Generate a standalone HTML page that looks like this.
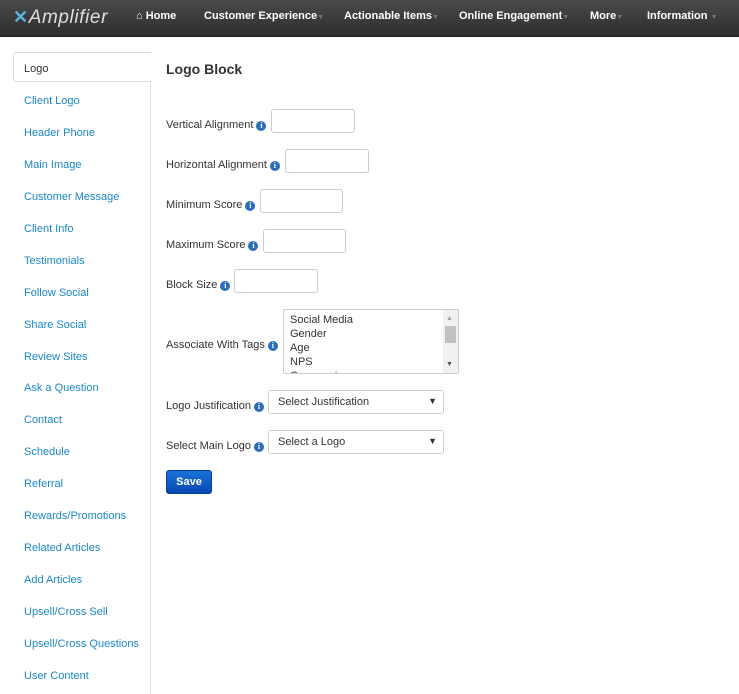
<!DOCTYPE html>
<html><head><style>
*{box-sizing:border-box}
body{margin:0;width:739px;height:694px;overflow:hidden;background:#fff;font-family:"Liberation Sans",Arial,sans-serif;font-size:11px;color:#333;position:relative}
.nav{position:absolute;left:0;top:0;width:739px;height:37px;background:linear-gradient(#4a4a4a,#2e2e2e);border-bottom:1px solid #222}
.nav span{position:absolute;top:10px;color:#fff;font-weight:bold;font-size:11px}
.nav .c{color:#777;font-size:7px;font-weight:normal;font-style:normal}
.logo{position:absolute;left:13px;top:7px;color:#ddd;font-style:italic;font-size:19px;font-family:"Liberation Sans",sans-serif;letter-spacing:0.6px}
.side{position:absolute;left:150px;top:52px;width:1px;height:642px;background:#ddd}
.act{position:absolute;left:13px;top:52px;width:138px;height:30px;border:1px solid #ddd;border-right:none;border-radius:4px 0 0 4px;background:#fff}
.si{position:absolute;left:24px;color:#1b87c9;font-size:11px;margin-top:2px}
h3{position:absolute;left:166px;top:61px;margin:0;font-size:14px;font-weight:bold;color:#333}
.lb{position:absolute;left:166px;font-size:11px;color:#333;margin-top:1px}
.i{display:inline-block;width:10px;height:10px;border-radius:50%;background:#2a6ebb;color:#fff;font-size:8px;font-weight:bold;text-align:center;line-height:10px;font-family:"Liberation Serif",serif;margin-left:3px;vertical-align:0px}
.in{position:absolute;height:24px;border:1px solid #ccc;border-radius:3px;background:#fff}
.sel{position:absolute;left:268px;width:176px;height:24px;border:1px solid #ccc;border-radius:3px;padding:5px 0 0 9px;font-size:11px}
.sel b{position:absolute;right:6px;top:5px;font-size:9px;font-weight:normal}
.btn{position:absolute;left:166px;top:470px;width:46px;height:24px;background:linear-gradient(#1a73d8,#0548b0);border:1px solid #043c94;border-radius:3px;color:#fff;font-weight:bold;text-align:center;line-height:23px}
</style></head><body>
<div class="nav">
<div class="logo"><span style="position:static;color:#5ab4e0;font-style:normal;font-size:18px;font-weight:bold">✕</span>Amplifier</div>
<span style="left:136px">⌂ Home</span>
<span style="left:204px">Customer Experience<i class="c">▼</i></span>
<span style="left:344px">Actionable Items<i class="c">▼</i></span>
<span style="left:459px">Online Engagement<i class="c">▼</i></span>
<span style="left:590px">More<i class="c">▼</i></span>
<span style="left:647px">Information <i class="c">▼</i></span>
</div>
<div class="side"></div>
<div class="act"></div>
<div class="si" style="top:61px;color:#333">Logo</div>
<div class="si" style="top:93px">Client Logo</div>
<div class="si" style="top:125px">Header Phone</div>
<div class="si" style="top:157px">Main Image</div>
<div class="si" style="top:189px">Customer Message</div>
<div class="si" style="top:221px">Client Info</div>
<div class="si" style="top:253px">Testimonials</div>
<div class="si" style="top:285px">Follow Social</div>
<div class="si" style="top:317px">Share Social</div>
<div class="si" style="top:349px">Review Sites</div>
<div class="si" style="top:380px">Ask a Question</div>
<div class="si" style="top:412px">Contact</div>
<div class="si" style="top:444px">Schedule</div>
<div class="si" style="top:476px">Referral</div>
<div class="si" style="top:508px">Rewards/Promotions</div>
<div class="si" style="top:540px">Related Articles</div>
<div class="si" style="top:572px">Add Articles</div>
<div class="si" style="top:604px">Upsell/Cross Sell</div>
<div class="si" style="top:636px">Upsell/Cross Questions</div>
<div class="si" style="top:668px">User Content</div>
<h3>Logo Block</h3>
<div class="lb" style="top:118px">Vertical Alignment<span class="i">i</span></div><div class="in" style="left:271px;top:109px;width:84px"></div>
<div class="lb" style="top:158px">Horizontal Alignment<span class="i">i</span></div><div class="in" style="left:285px;top:149px;width:84px"></div>
<div class="lb" style="top:198px">Minimum Score<span class="i">i</span></div><div class="in" style="left:260px;top:189px;width:83px"></div>
<div class="lb" style="top:238px">Maximum Score<span class="i">i</span></div><div class="in" style="left:263px;top:229px;width:83px"></div>
<div class="lb" style="top:278px">Block Size<span class="i">i</span></div><div class="in" style="left:234px;top:269px;width:84px"></div>
<div class="lb" style="top:338px">Associate With Tags<span class="i">i</span></div>
<div style="position:absolute;left:283px;top:309px;width:176px;height:65px;border:1px solid #ccc;border-radius:2px;overflow:hidden;font-size:11px;line-height:14px;padding:3px 0 0 6px">Social Media<br>Gender<br>Age<br>NPS<br>Comments
<div style="position:absolute;right:0;top:0;width:15px;height:63px;background:#f1f1f1"><div style="position:absolute;left:2px;top:16px;width:11px;height:17px;background:#c1c1c1"></div><div style="position:absolute;left:3px;top:2px;font-size:7px;color:#a3a3a3">▲</div><div style="position:absolute;left:3px;top:48px;font-size:7px;color:#505050">▼</div></div></div>
<div class="lb" style="top:399px">Logo Justification<span class="i">i</span></div>
<div class="sel" style="top:390px">Select Justification<b>▼</b></div>
<div class="lb" style="top:439px">Select Main Logo<span class="i">i</span></div>
<div class="sel" style="top:430px">Select a Logo<b>▼</b></div>
<div class="btn">Save</div>
</body></html>
